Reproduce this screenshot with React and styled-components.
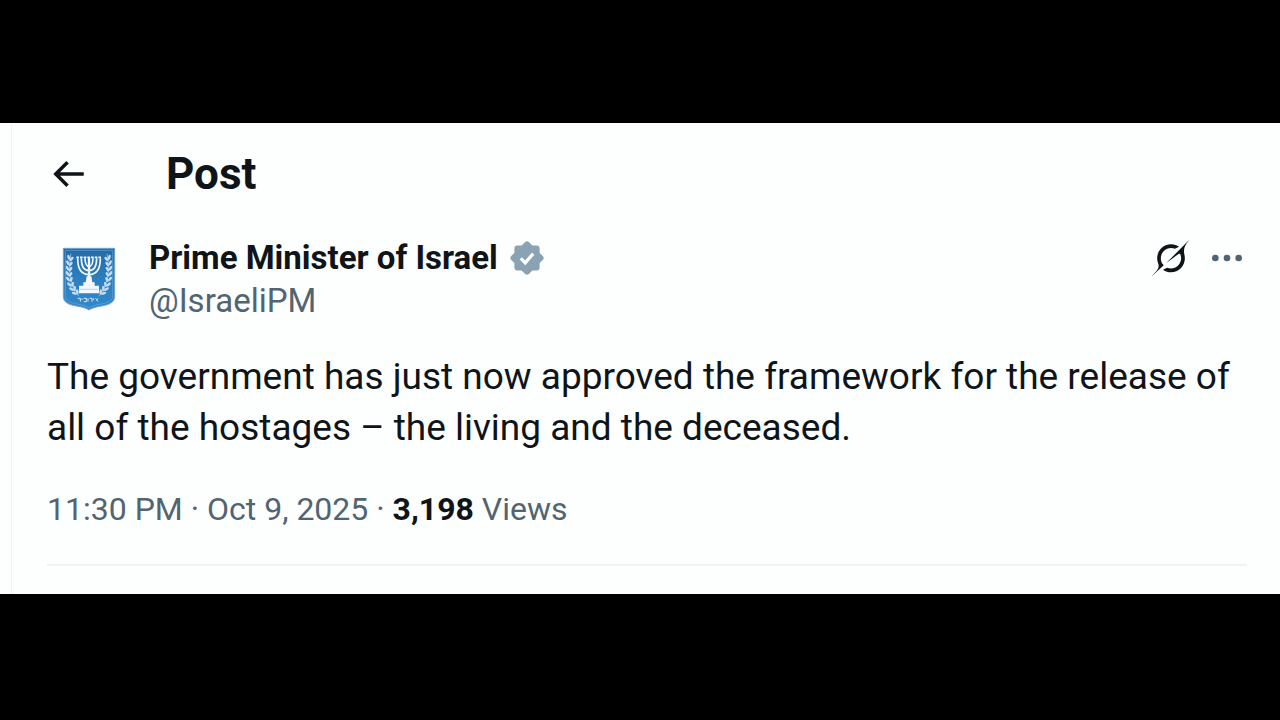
import React from 'react';
import styled, { createGlobalStyle } from 'styled-components';

const GlobalStyle = createGlobalStyle`
    * {
        box-sizing: border-box;
    }
    body {
        margin: 0;
        background-color: #000000;
        font-family: Roboto, "Liberation Sans", sans-serif;
        color: #0f1419;
    }
`;

const BackIcon = () => (
    <svg width="42" height="42" viewBox="0 0 24 24" fill="currentColor" aria-hidden="true">
        <path d="M7.414 13l5.043 5.04-1.414 1.42L3.586 12l7.457-7.46 1.414 1.42L7.414 11H21v2H7.414z" />
    </svg>
);

const VerifiedIcon = () => (
    <svg width="38" height="38" viewBox="0 0 38 38" fill="#8aa2b1" role="img" aria-label="Verified account">
        <rect x="6.4" y="6.4" width="25.2" height="25.2" rx="3" />
        <rect x="6.4" y="6.4" width="25.2" height="25.2" rx="3" transform="rotate(45 19 19)" />
        <path d="M12.8 19.4L17.2 23.9L25.2 14.6" fill="none" stroke="#ffffff" strokeWidth="3.2" />
    </svg>
);

const GrokIcon = () => (
    <svg width="37" height="36" viewBox="0 0 33 32" fill="currentColor" aria-hidden="true">
        <path d="M12.745 20.54l10.97-8.19c.539-.4 1.307-.244 1.564.38 1.349 3.288.746 7.241-1.938 9.955-2.683 2.714-6.417 3.31-9.83 1.954l-3.728 1.745c5.347 3.697 11.84 2.782 15.898-1.324 3.219-3.255 4.216-7.692 3.284-11.693l.008.009c-1.351-5.878.332-8.227 3.782-13.031L33 0l-4.54 4.59v-.014L12.743 20.544m-2.263 1.987c-3.837-3.707-3.175-9.446.1-12.755 2.42-2.449 6.388-3.448 9.852-1.979l3.72-1.737c-.67-.49-1.53-1.017-2.515-1.387-4.455-1.854-9.789-.931-13.41 2.728-3.483 3.523-4.579 8.94-2.697 13.561 1.405 3.454-.899 5.898-3.22 8.364C1.49 30.2.666 31.074 0 32l10.478-9.466" />
    </svg>
);

const MoreIcon = () => (
    <svg width="40" height="40" viewBox="0 0 24 24" fill="currentColor" aria-hidden="true">
        <circle cx="5" cy="12" r="2" />
        <circle cx="12" cy="12" r="2" />
        <circle cx="19" cy="12" r="2" />
    </svg>
);

// one olive branch, mirrored for the right side
const leaves = [
    [58, 66, 14], [55, 82, 8], [54, 98, 4], [54, 114, 0],
    [55, 130, -8], [59, 146, -16], [65, 160, -28], [73, 172, -40]
];

const Branch = () => (
    <g>
        <path d="M62 56C56 90 52 140 86 184" fill="none" stroke="#b9d6ee" strokeWidth="2" />
        {leaves.map(([x, y, turn]) => (
            <g key={y} transform={`translate(${x} ${y}) rotate(${turn})`} fill="#c3dcf0">
                <ellipse cx="-3" cy="0" rx="4" ry="8" transform="rotate(-32)" />
                <ellipse cx="8" cy="0" rx="4" ry="8" transform="rotate(32)" />
            </g>
        ))}
    </g>
);

const Emblem = () => (
    <svg width="54" height="64" viewBox="35 36 162 192" role="img" aria-label="Emblem of Israel">
        <defs>
            <linearGradient id="shield" x1="0" y1="0" x2="0" y2="1">
                <stop offset="0" stopColor="#2469a6" />
                <stop offset="0.5" stopColor="#2d7fc0" />
                <stop offset="1" stopColor="#3188c8" />
            </linearGradient>
        </defs>
        <path
            d="M39 40H193V184C193 202 178 209 154 213C136 216 124 219 116 225C108 219 96 216 78 213C54 209 39 202 39 184Z"
            fill="url(#shield)"
            stroke="#6fa5d2"
            strokeWidth="3"
        />
        <path
            d="M45 46H187V183C187 198 173 203 152 207C135 210 124 213 116 218C108 213 97 210 80 207C59 203 45 198 45 183Z"
            fill="none"
            stroke="#6aa6d6"
            strokeWidth="2"
        />
        <Branch />
        <g transform="translate(232 0) scale(-1 1)">
            <Branch />
        </g>
        <g fill="none" stroke="#f2f8fd" strokeWidth="5">
            <path d="M116 66V150" strokeWidth="7" />
            <path d="M82 70C82 104 96 119 116 119S150 104 150 70" />
            <path d="M93 70C93 94 102 107 116 107S139 94 139 70" />
            <path d="M104 70C104 84 109 94 116 94S128 84 128 70" />
            <path d="M78 67H154" strokeWidth="5" strokeDasharray="8 3" />
        </g>
        <path d="M109 124H123L126 142H133V152H146V175H86V152H99V142H106Z" fill="#f2f8fd" />
        <path d="M90 163H142" stroke="#9cc4e4" strokeWidth="2" />
        <path
            d="M82 190H90V200M95 190V195M100 190H108V200H100M113 190V200M118 190H125V200M130 190V195M136 190L143 200M143 190L139 195"
            fill="none"
            stroke="#d5e7f5"
            strokeWidth="3"
        />
    </svg>
);

function App() {
    return (
        <Page>
            <GlobalStyle />
            <Column>
                <Header>
                    <IconButton type="button" aria-label="Back">
                        <BackIcon />
                    </IconButton>
                    <Title>Post</Title>
                </Header>
                <Post>
                    <Author>
                        <Avatar href="#profile">
                            <Emblem />
                        </Avatar>
                        <Names>
                            <NameRow>
                                <Name href="#profile">Prime Minister of Israel</Name>
                                <VerifiedIcon />
                            </NameRow>
                            <Handle href="#profile">@IsraeliPM</Handle>
                        </Names>
                        <Actions>
                            <IconButton type="button" aria-label="Explain this post">
                                <GrokIcon />
                            </IconButton>
                            <IconButton type="button" aria-label="More" $muted>
                                <MoreIcon />
                            </IconButton>
                        </Actions>
                    </Author>
                    <Message>
                        The government has just now approved the framework for the release of
                        all of the hostages – the living and the deceased.
                    </Message>
                    <Meta>
                        <time dateTime="2025-10-09T23:30">11:30 PM · Oct 9, 2025</time>
                        {' · '}
                        <Count>3,198</Count> Views
                    </Meta>
                </Post>
            </Column>
        </Page>
    );
}

const Page = styled.div`
    padding: 123px 0;
    background-color: #000000;
`;
const Column = styled.main`
    padding: 24px 33px 28px 47px;
    background-color: #fdfefe;
    background-image: linear-gradient(#eff3f4, #eff3f4);
    background-position: 11px 0;
    background-size: 1px 100%;
    background-repeat: no-repeat;
`;
const Header = styled.header`
    display: flex;
    align-items: center;
    gap: 77px;
    height: 54px;
`;
const Title = styled.h1`
    margin: 0;
    font-size: 44px;
    line-height: 54px;
    font-weight: 700;
`;
const IconButton = styled.button`
    display: flex;
    padding: 0;
    border: 0;
    background: none;
    color: ${props => (props.$muted ? '#536471' : '#0f1419')};
    cursor: pointer;
`;
const Post = styled.article`
    padding-top: 35px;
    border-bottom: 2px solid #eff3f4;
`;
const Author = styled.div`
    display: flex;
    align-items: flex-start;
`;
const Avatar = styled.a`
    display: flex;
    align-items: center;
    justify-content: center;
    width: 84px;
    height: 86px;
    margin-right: 18px;
`;
const Names = styled.div`
    display: flex;
    flex-direction: column;
    flex: 1;
`;
const NameRow = styled.div`
    display: flex;
    align-items: center;
    gap: 10px;
`;
const Name = styled.a`
    font-size: 33px;
    line-height: 43px;
    font-weight: 700;
    color: #0f1419;
    text-decoration: none;
`;
const Handle = styled.a`
    font-size: 33px;
    line-height: 43px;
    color: #536471;
    text-decoration: none;
`;
const Actions = styled.div`
    display: flex;
    align-items: center;
    gap: 18px;
    height: 43px;
`;
const Message = styled.p`
    margin: 29px 0 0;
    font-size: 37px;
    line-height: 51px;
`;
const Meta = styled.div`
    padding: 35px 0 33px;
    font-size: 32px;
    line-height: 43px;
    color: #536471;
`;
const Count = styled.strong`
    font-weight: 700;
    color: #0f1419;
`;

export default App;
